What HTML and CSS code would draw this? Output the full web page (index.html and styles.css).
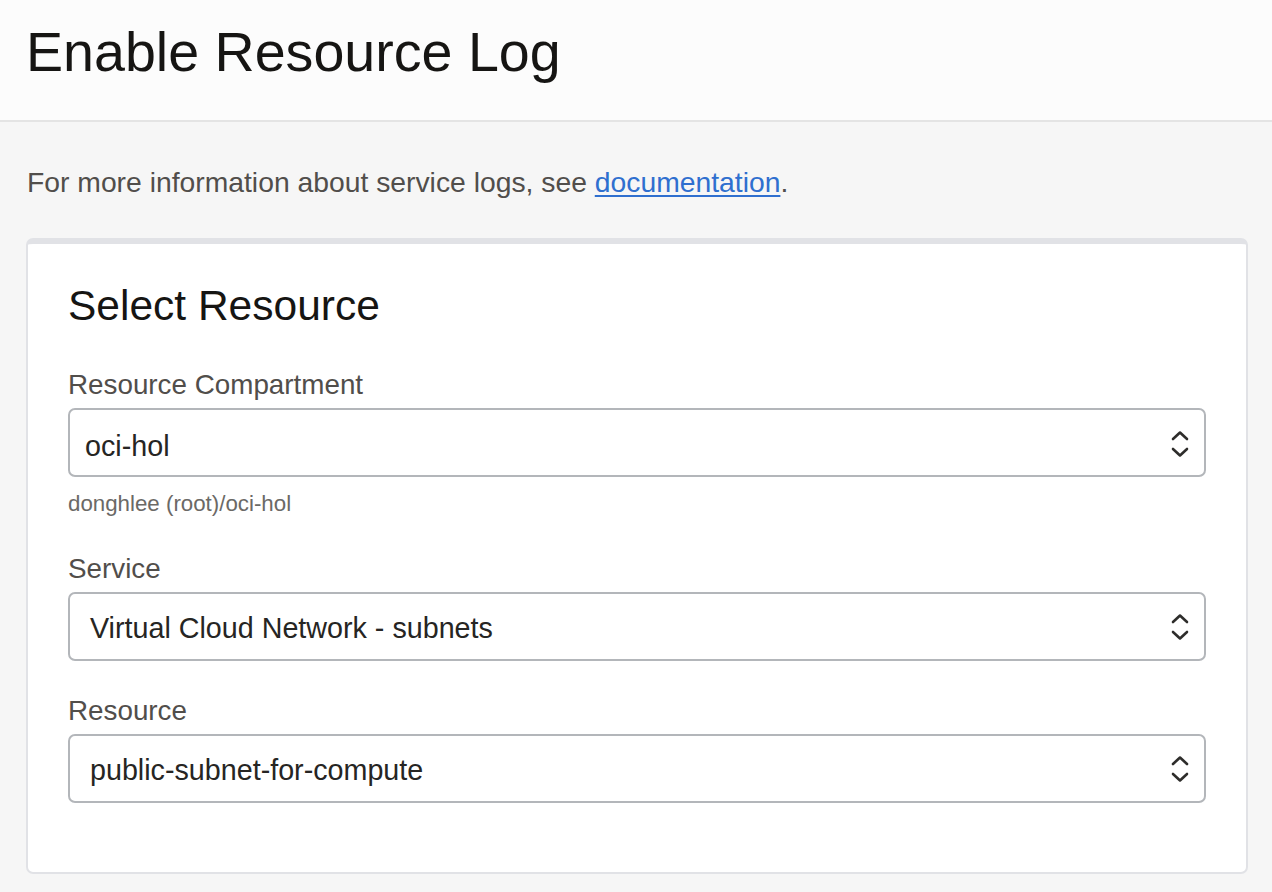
FILE: index.html
```html
<!DOCTYPE html>
<html lang="en">
<head>
<meta charset="utf-8">
<title>Enable Resource Log</title>
<link rel="stylesheet" href="styles.css">
</head>
<body>
<header class="page-header">
  <h1 class="page-title">Enable Resource Log</h1>
</header>
<main class="page-body">
  <p class="intro">For more information about service logs, see <a href="#" class="link">documentation</a>.</p>
  <section class="card">
    <h2 class="card-title">Select Resource</h2>

    <div class="field field-help">
      <label class="field-label">Resource Compartment</label>
      <div class="select select-compact">
        <span class="select-value">oci-hol</span>
        <svg class="select-icon" width="20" height="32" viewBox="0 0 20 32" aria-hidden="true">
          <path d="M3 11 L10 4.5 L17 11" fill="none" stroke="#2e2d2b" stroke-width="2.6" stroke-linecap="round" stroke-linejoin="round"/>
          <path d="M3 21 L10 27.5 L17 21" fill="none" stroke="#2e2d2b" stroke-width="2.6" stroke-linecap="round" stroke-linejoin="round"/>
        </svg>
      </div>
      <div class="field-hint">donghlee (root)/oci-hol</div>
    </div>

    <div class="field">
      <label class="field-label">Service</label>
      <div class="select">
        <span class="select-value">Virtual Cloud Network - subnets</span>
        <svg class="select-icon" width="20" height="32" viewBox="0 0 20 32" aria-hidden="true">
          <path d="M3 11 L10 4.5 L17 11" fill="none" stroke="#2e2d2b" stroke-width="2.6" stroke-linecap="round" stroke-linejoin="round"/>
          <path d="M3 21 L10 27.5 L17 21" fill="none" stroke="#2e2d2b" stroke-width="2.6" stroke-linecap="round" stroke-linejoin="round"/>
        </svg>
      </div>
    </div>

    <div class="field">
      <label class="field-label">Resource</label>
      <div class="select">
        <span class="select-value">public-subnet-for-compute</span>
        <svg class="select-icon" width="20" height="32" viewBox="0 0 20 32" aria-hidden="true">
          <path d="M3 11 L10 4.5 L17 11" fill="none" stroke="#2e2d2b" stroke-width="2.6" stroke-linecap="round" stroke-linejoin="round"/>
          <path d="M3 21 L10 27.5 L17 21" fill="none" stroke="#2e2d2b" stroke-width="2.6" stroke-linecap="round" stroke-linejoin="round"/>
        </svg>
      </div>
    </div>
  </section>
</main>
</body>
</html>
```

FILE: styles.css
```css
* { box-sizing: border-box; }

html, body {
  margin: 0;
  padding: 0;
}

body {
  font-family: "Liberation Sans", Arial, Helvetica, sans-serif;
  background: #f6f6f6;
  color: #161513;
  width: 1272px;
  height: 892px;
  overflow: hidden;
}

.page-header {
  height: 122px;
  background: #fcfcfc;
  border-bottom: 2px solid #e4e4e4;
  padding: 20px 0 0 26px;
}

.page-title {
  margin: 0;
  font-size: 55.6px;
  line-height: 64px;
  font-weight: 400;
  color: #161513;
}

.page-body {
  padding: 40px 24px 0 26px;
}

.intro {
  margin: 0 0 36px;
  padding-left: 1px;
  font-size: 28.3px;
  line-height: 40px;
  color: #514e4b;
}

.link {
  color: #2f6fcf;
  text-decoration: underline;
  text-underline-offset: 3px;
  text-decoration-thickness: 2px;
}

.card {
  width: 1222px;
  background: #ffffff;
  border: 2px solid #e1e2e6;
  border-top-width: 6px;
  border-radius: 7px;
  padding: 38px 40px 69px;
}

.card-title {
  margin: 0 0 39px;
  font-size: 42.5px;
  line-height: 48px;
  font-weight: 400;
  color: #161513;
}

.field {
  display: flex;
  flex-direction: column;
  margin-bottom: 34px;
}

.field:last-child {
  margin-bottom: 0;
}

.field-help {
  margin-bottom: 35px;
}

.field-label {
  font-size: 27.8px;
  line-height: 32px;
  color: #514e4b;
  margin-bottom: 7px;
}

.select {
  height: 69px;
  border: 2px solid #b3b6ba;
  border-radius: 7px;
  background: #ffffff;
  display: flex;
  align-items: center;
  justify-content: space-between;
  padding: 3px 14px 0 20px;
}

.select-compact {
  padding-left: 15px;
  padding-top: 6px;
}

.select-compact .select-icon {
  margin-top: -6px;
}

.select .select-icon {
  margin-top: -3px;
}

.select-value {
  font-size: 28.7px;
  line-height: 34px;
  color: #262523;
}

.select-icon {
  flex: none;
  display: block;
}

.field-hint {
  margin-top: 12px;
  font-size: 22.3px;
  line-height: 29px;
  color: #6b6966;
}
```
